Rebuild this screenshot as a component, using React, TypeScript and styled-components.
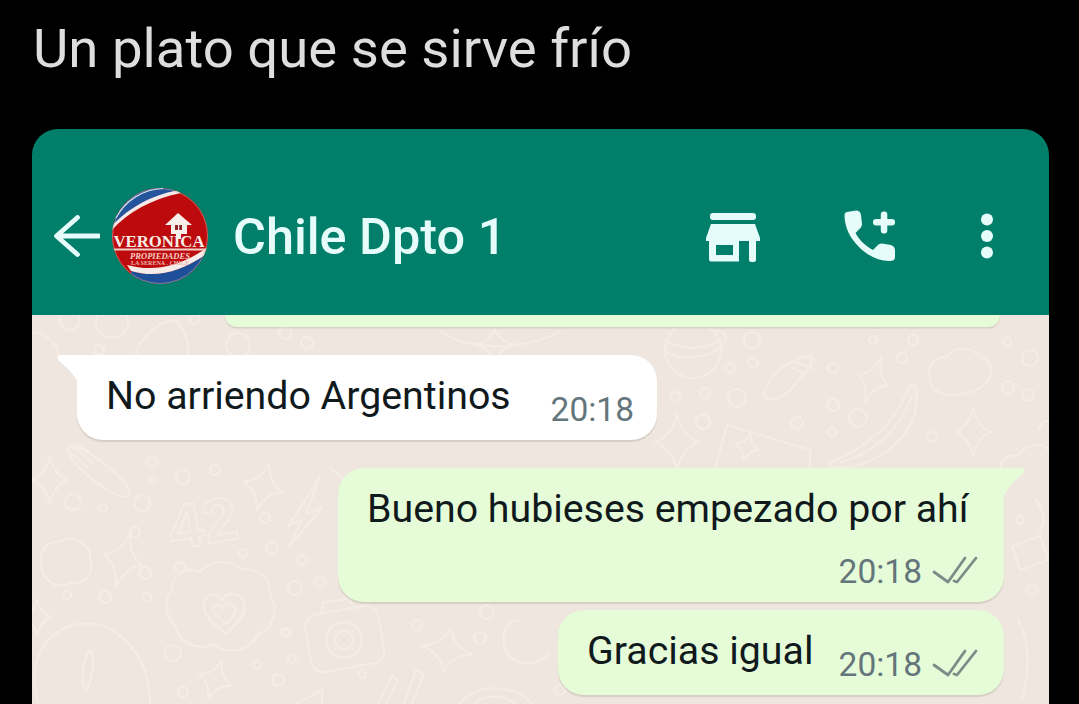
import styled, { createGlobalStyle } from "styled-components";

const GlobalStyle = createGlobalStyle`
  html, body {
    margin: 0;
    background: #000;
    overflow: hidden;
  }
`;

// wallpaper rings: x, y, radius
const RINGS = [
  [752, 340, 8], [730, 368, 5], [753, 363, 5], [833, 368, 5], [833, 405, 6], [858, 418, 9], [797, 423, 6],
  [832, 432, 4], [932, 437, 5], [1008, 387, 6], [1028, 395, 6], [1030, 358, 8], [737, 398, 9], [705, 393, 5],
  [675, 397, 5], [703, 422, 7], [902, 358, 5], [873, 340, 4], [913, 340, 5], [1007, 342, 4],
  [417, 625, 5], [480, 638, 6], [487, 612, 7], [285, 632, 4], [292, 659, 4], [362, 674, 4],
  [73, 502, 8], [103, 508, 4], [142, 503, 8], [152, 462, 5], [183, 477, 7], [215, 470, 5], [153, 480, 3],
  [145, 573, 6], [135, 532, 5], [180, 567, 5], [272, 548, 6], [302, 560, 5], [265, 518, 5], [243, 553, 4],
  [320, 582, 5], [295, 588, 7], [67, 595, 4], [105, 597, 6], [147, 597, 4], [173, 653, 8], [278, 680, 6],
  [257, 665, 4], [287, 633, 4], [183, 692, 5], [70, 320, 10], [112, 322, 16], [195, 319, 5],
  [238, 345, 12], [285, 333, 6], [307, 343, 6], [99, 350, 5], [1032, 590, 5], [1020, 520, 4], [560, 690, 5],
];

// four point stars: x, y, half width, half height, rotation
const STARS = [
  [873, 380, 16, 24, 20], [973, 432, 18, 24, 0], [677, 442, 22, 28, 0], [747, 447, 12, 14, 15],
  [447, 650, 25, 22, 10], [50, 480, 18, 24, 0], [263, 487, 20, 24, 15], [123, 560, 20, 28, 15],
  [215, 680, 17, 20, 20], [37, 617, 14, 18, 0], [495, 345, 20, 16, 0],
];

function starPath(x: number, y: number, w: number, h: number) {
  const a = w * 0.22;
  const b = h * 0.22;
  return `M${x} ${y - h}Q${x + a} ${y - b} ${x + w} ${y}Q${x + a} ${y + b} ${x} ${y + h}Q${x - a} ${y + b} ${x - w} ${y}Q${x - a} ${y - b} ${x} ${y - h}Z`;
}

function BackArrow() {
  return (
    <svg width="46" height="42" viewBox="0 0 46 42" fill="none" stroke="#e6fcfa" strokeWidth="4.8" strokeLinecap="round" strokeLinejoin="round">
      <path d="M45 21H3M23.500 2.500 2.500 21l21 18.500" />
    </svg>
  );
}

function Avatar() {
  return (
    <svg width="98" height="98" viewBox="0 0 98 98">
      <defs>
        <clipPath id="avatar-clip">
          <circle cx="49" cy="49" r="48" />
        </clipPath>
      </defs>
      <g clipPath="url(#avatar-clip)">
        <rect width="98" height="98" fill="#bd0b0d" />
        <path d="M0 42C16 24 40 10 68 6L50 -4H0Z" fill="#23549c" />
        <path d="M0 44C16 26 40 12 70 6L66 3.500C40 8 16 22 0 40Z" fill="#f4e9e6" />
        <path d="M20 84C46 92 72 84 98 65V98H20Z" fill="#1f4f98" />
        <path d="M16 78C44 86 72 78 97 60V66C72 84 46 92 20 84Z" fill="#f6ece8" />
        <path d="M67 26 81 38H76V47H70V52H65V47H60V38H54Z" fill="#f8eeea" />
        <rect x="64" y="38" width="7" height="5" fill="#8e2426" />
        <rect x="67" y="38" width="1.200" height="5" fill="#f8eeea" />
        <rect x="2" y="61.500" width="94" height="2" fill="#efcfc8" />
      </g>
      <AvatarName x="48" y="60" textLength="91" lengthAdjust="spacingAndGlyphs">VERONICA</AvatarName>
      <AvatarSub x="49" y="72" textLength="60" lengthAdjust="spacingAndGlyphs">PROPIEDADES</AvatarSub>
      <AvatarPlace x="49" y="78" textLength="58" lengthAdjust="spacingAndGlyphs">LA SERENA . CHILE</AvatarPlace>
      <path d="M5 31C14 14 32 2 52 1.500" fill="none" stroke="#dbeef2" strokeWidth="1.200" />
      <circle cx="49" cy="49" r="47.500" fill="none" stroke="#d7b9a5" strokeOpacity="0.5" />
    </svg>
  );
}

function StoreIcon() {
  return (
    <svg width="54" height="50" viewBox="0 0 54 50" fill="#e6fcfa">
      <rect x="4" y="0" width="46" height="7" rx="3" />
      <path d="M5 11H49L54 25V28H0V25Z" />
      <path fillRule="evenodd" d="M3 28H33V48.500H5A2 2 0 0 1 3 46.500ZM10 32V42H27V32Z" />
      <rect x="43" y="26" width="7" height="23" rx="2.500" />
    </svg>
  );
}

function AddCallIcon() {
  return (
    <svg width="52" height="52" viewBox="0 0 52 52" fill="#e6fcfa">
      <path d="M3 2 12 0.500C15 0.500 16.500 2 17 5L18 14C18 17 16 18.500 11.500 23C15 30 22 36 29 40C33 36 35 33 38 33.500L47 35C50 36 51 38 51 41V47C51 50 49 51 45 51C35 51 24 46 15 37C6 28 1 18 0.500 6C0.500 3.500 1 2.500 3 2Z" />
      <rect x="29" y="9" width="22" height="6.500" rx="3" />
      <rect x="36.800" y="1.500" width="6.500" height="22" rx="3" />
    </svg>
  );
}

function MenuIcon() {
  return (
    <svg width="14" height="46" viewBox="0 0 14 46" fill="#e6fcfa">
      <circle cx="7" cy="6.500" r="6" />
      <circle cx="7" cy="23" r="6" />
      <circle cx="7" cy="39.500" r="6" />
    </svg>
  );
}

function DoubleCheck() {
  return (
    <CheckSvg width="46" height="30" viewBox="0 0 46 30" fill="none" stroke="#7b8d88" strokeWidth="2.8" strokeLinecap="round" strokeLinejoin="round">
      <path d="M2 17 16 27 33 3M22 26 25 27 44 3" />
    </CheckSvg>
  );
}

function Wallpaper() {
  return (
    <WallpaperSvg viewBox="32 315 1017 389" fill="none" stroke="#f4ede6" strokeWidth="2.200" strokeLinecap="round" strokeLinejoin="round">
      {RINGS.map(([x, y, r]) => (
        <circle key={`${x}-${y}`} cx={x} cy={y} r={r} />
      ))}
      {STARS.map(([x, y, w, h, rot]) => (
        <path key={`${x}-${y}`} d={starPath(x, y, w, h)} transform={`rotate(${rot} ${x} ${y})`} />
      ))}
      {/* planet */}
      <circle cx="693" cy="350" r="28" />
      <path d="M666 352C680 360 706 360 722 346C730 338 726 332 716 330M668 342C690 352 706 348 722 340" />
      {/* chili */}
      <path d="M763 395C770 372 790 358 813 355C812 366 805 372 800 378C790 394 772 406 763 395Z" />
      <path d="M795 362 812 368M792 368 806 374M798 356 816 360" />
      {/* clouds */}
      <path d="M930 378C926 364 938 356 946 358C952 346 974 346 980 358C990 358 994 372 988 380C980 394 950 398 938 392C932 390 930 384 930 378Z" />
      <path d="M1000 470C1000 458 1012 454 1018 456C1024 444 1042 442 1049 450" />
      <path d="M42 570C36 552 48 540 60 542C72 532 92 546 90 558C96 572 84 586 72 582C60 590 46 584 42 570Z" />
      {/* banana */}
      <path d="M830 462C868 448 898 420 908 388L915 384C917 392 917 400 916 410C912 434 880 466 840 468C832 468 828 466 830 462Z" />
      <path d="M840 462C870 456 900 430 912 396" />
      {/* card */}
      <path d="M727 425 810 450V480H712Z" />
      {/* long bean at left */}
      <path d="M70 445C90 450 115 470 130 490C132 500 118 498 108 490C92 480 74 466 68 452C68 448 69 446 70 445Z" />
      <path d="M74 447 92 462M70 452 88 468M78 444 96 458" />
      {/* 42 */}
      <NumberDoodle x="168" y="544" transform="rotate(-10 205 520)">42</NumberDoodle>
      {/* lightning */}
      <path d="M320 476C308 496 300 510 288 526L302 520 288 548 322 508 306 514Z" />
      <path d="M330 468 345 480" />
      {/* flower + heart */}
      <path d="M172 590C170 575 188 566 200 572C212 558 232 560 242 570C258 566 272 580 270 596C280 610 272 630 258 634C252 650 226 656 214 644C196 652 178 642 176 626C164 616 164 600 172 590Z" />
      <path d="M222 600C214 588 202 598 204 608C206 620 220 628 226 634C234 626 248 614 244 602C240 592 226 592 222 600Z" />
      <path d="M222 608C218 602 212 606 213 610C215 616 222 620 226 624C230 620 237 614 235 608C232 602 225 603 222 608Z" />
      {/* egg */}
      <path d="M36 665C44 628 84 614 112 630C138 646 156 680 148 720H44C36 700 32 680 36 665Z" />
      <path d="M90 650C96 660 92 680 86 692C80 680 82 660 90 650Z" />
      {/* camera */}
      <g transform="rotate(-10 344 640)">
        <rect x="308" y="610" width="74" height="58" rx="12" />
        <path d="M326 610 330 600H356L360 610" />
        <circle cx="344" cy="640" r="18" />
        <circle cx="344" cy="640" r="9" />
      </g>
      {/* stripes + arcs at the bottom */}
      <path d="M378 704 392 676 398 680 386 704M404 704 416 670 424 674 412 704" />
      <path d="M460 704C470 684 516 682 532 704M474 704C484 694 504 694 516 704" />
      <path d="M520 620C500 620 498 650 514 660C526 666 540 664 548 654" />
      <path d="M296 704 322 690 322 704" />
      {/* top strip */}
      <path d="M34 332C50 334 60 348 58 356M136 354C140 338 156 322 176 320C186 334 190 346 188 354" />
      <path d="M440 330C460 350 520 352 560 332" />
      <path d="M1036 500C1044 510 1046 520 1040 530M1018 620C1030 640 1030 670 1022 700M1038 430C1042 420 1048 420 1049 422" />
      <path d="M1012 546 1040 536 1049 560 1020 570Z" />
    </WallpaperSvg>
  );
}

export default function App() {
  return (
    <Page>
      <GlobalStyle />
      <Caption>Un plato que se sirve frío</Caption>
      <Card>
        <Header>
          <BackArrow />
          <AvatarWrap>
            <Avatar />
          </AvatarWrap>
          <ChatName>Chile Dpto 1</ChatName>
          <Actions>
            <StoreWrap>
              <StoreIcon />
            </StoreWrap>
            <AddCallIcon />
            <MenuIcon />
          </Actions>
        </Header>
        <Chat>
          <Wallpaper />
          <PeekBubble />
          <Incoming>
            <Tail $side="left" />
            <MessageText>No arriendo Argentinos</MessageText>
            <Time>20:18</Time>
          </Incoming>
          <Outgoing $tall>
            <Tail $side="right" />
            <MessageText>Bueno hubieses empezado por ahí</MessageText>
            <Meta>
              <Time>20:18</Time>
              <DoubleCheck />
            </Meta>
          </Outgoing>
          <Outgoing>
            <MessageText>Gracias igual</MessageText>
            <Meta>
              <Time>20:18</Time>
              <DoubleCheck />
            </Meta>
          </Outgoing>
        </Chat>
      </Card>
    </Page>
  );
}

const Page = styled.div`
  height: 704px;
  box-sizing: border-box;
  padding: 0 30px 0 32px;
  background: #000;
  overflow: hidden;
  font-family: Roboto, "Liberation Sans", sans-serif;
`;

const Caption = styled.h1`
  margin: 0;
  height: 129px;
  padding: 18px 0 0 1px;
  box-sizing: border-box;
  color: #dedede;
  font-size: 54.5px;
  line-height: 60px;
  font-weight: 400;
`;

const Card = styled.div`
  border-radius: 26px 26px 0 0;
  overflow: hidden;
`;

const Header = styled.header`
  height: 186px;
  box-sizing: border-box;
  padding: 28px 0 0 22px;
  display: flex;
  align-items: center;
  background: #027f6a;
`;

const AvatarWrap = styled.div`
  display: flex;
  margin-left: 11px;
`;

const AvatarName = styled.text`
  text-anchor: middle;
  font-family: "Liberation Serif", serif;
  font-weight: 700;
  font-size: 16.5px;
  fill: #f8ece6;
`;

const AvatarSub = styled.text`
  text-anchor: middle;
  font-family: "Liberation Serif", serif;
  font-style: italic;
  font-weight: 700;
  font-size: 8px;
  fill: #f3d2c6;
`;

const AvatarPlace = styled.text`
  text-anchor: middle;
  font-family: "Liberation Serif", serif;
  font-weight: 700;
  font-size: 6px;
  fill: #eeb6ac;
`;

const ChatName = styled.div`
  margin-left: 24px;
  color: #e6fcfa;
  font-size: 50.4px;
  font-weight: 500;
`;

const Actions = styled.div`
  margin-left: auto;
  padding-right: 55px;
  display: flex;
  align-items: center;
  gap: 84px;
`;

const StoreWrap = styled.div`
  display: flex;
  padding-top: 3px;
`;

const Chat = styled.main`
  position: relative;
  height: 389px;
  display: flex;
  flex-direction: column;
  background: #efe7df;
`;

const WallpaperSvg = styled.svg`
  position: absolute;
  inset: 0;
  width: 100%;
  height: 100%;
`;

const NumberDoodle = styled.text`
  font-family: "Liberation Sans", sans-serif;
  font-size: 62px;
  font-weight: 700;
  stroke-width: 1.8;
`;

const Bubble = styled.div`
  position: relative;
  box-sizing: border-box;
  border-radius: 26px;
  box-shadow: 0 1.5px 1px rgba(120, 110, 95, 0.2);
`;

const PeekBubble = styled(Bubble)`
  height: 12px;
  margin: 0 49px 0 193px;
  border-radius: 0 0 24px 24px;
  background: #e6fcd8;
`;

const Incoming = styled(Bubble)`
  align-self: flex-start;
  width: 580px;
  height: 85px;
  margin: 28px 0 0 45px;
  padding: 0 23px 0 29px;
  display: flex;
  justify-content: space-between;
  border-top-left-radius: 0;
  background: #fff;
`;

const Outgoing = styled(Bubble)<{ $tall?: boolean }>`
  align-self: flex-end;
  width: ${(p) => (p.$tall ? "666px" : "446px")};
  height: ${(p) => (p.$tall ? "134px" : "85px")};
  margin: ${(p) => (p.$tall ? "28px 45px 0 0" : "8px 45px 0 0")};
  padding: 0 26px 0 29px;
  display: flex;
  flex-direction: ${(p) => (p.$tall ? "column" : "row")};
  justify-content: space-between;
  border-top-right-radius: ${(p) => (p.$tall ? "0" : "26px")};
  background: #e6fcd8;
`;

const Tail = styled.span<{ $side: "left" | "right" }>`
  position: absolute;
  top: 0;
  ${(p) => (p.$side === "left" ? "left: -20px;" : "right: -21px;")}
  width: 22px;
  height: 30px;
  background: ${(p) => (p.$side === "left" ? "#fff" : "#e6fcd8")};
  clip-path: ${(p) =>
    p.$side === "left"
      ? 'path("M4 0H22V30C17 18 9 12 2 6C0 3 1 0 4 0Z")'
      : 'path("M0 0H18C21 0 22 3 20 6C13 12 5 18 0 30Z")'};
`;

const MessageText = styled.div`
  padding-top: 19px;
  color: #101a1d;
  font-size: 39.3px;
  line-height: 44px;
  white-space: nowrap;
`;

const Meta = styled.div`
  align-self: flex-end;
  display: flex;
  align-items: flex-end;
  gap: 10px;
`;

const CheckSvg = styled.svg`
  margin-bottom: 17px;
`;

const Time = styled.span`
  align-self: flex-end;
  padding-bottom: 10px;
  color: #64767b;
  font-size: 33.5px;
  line-height: 40px;
`;
